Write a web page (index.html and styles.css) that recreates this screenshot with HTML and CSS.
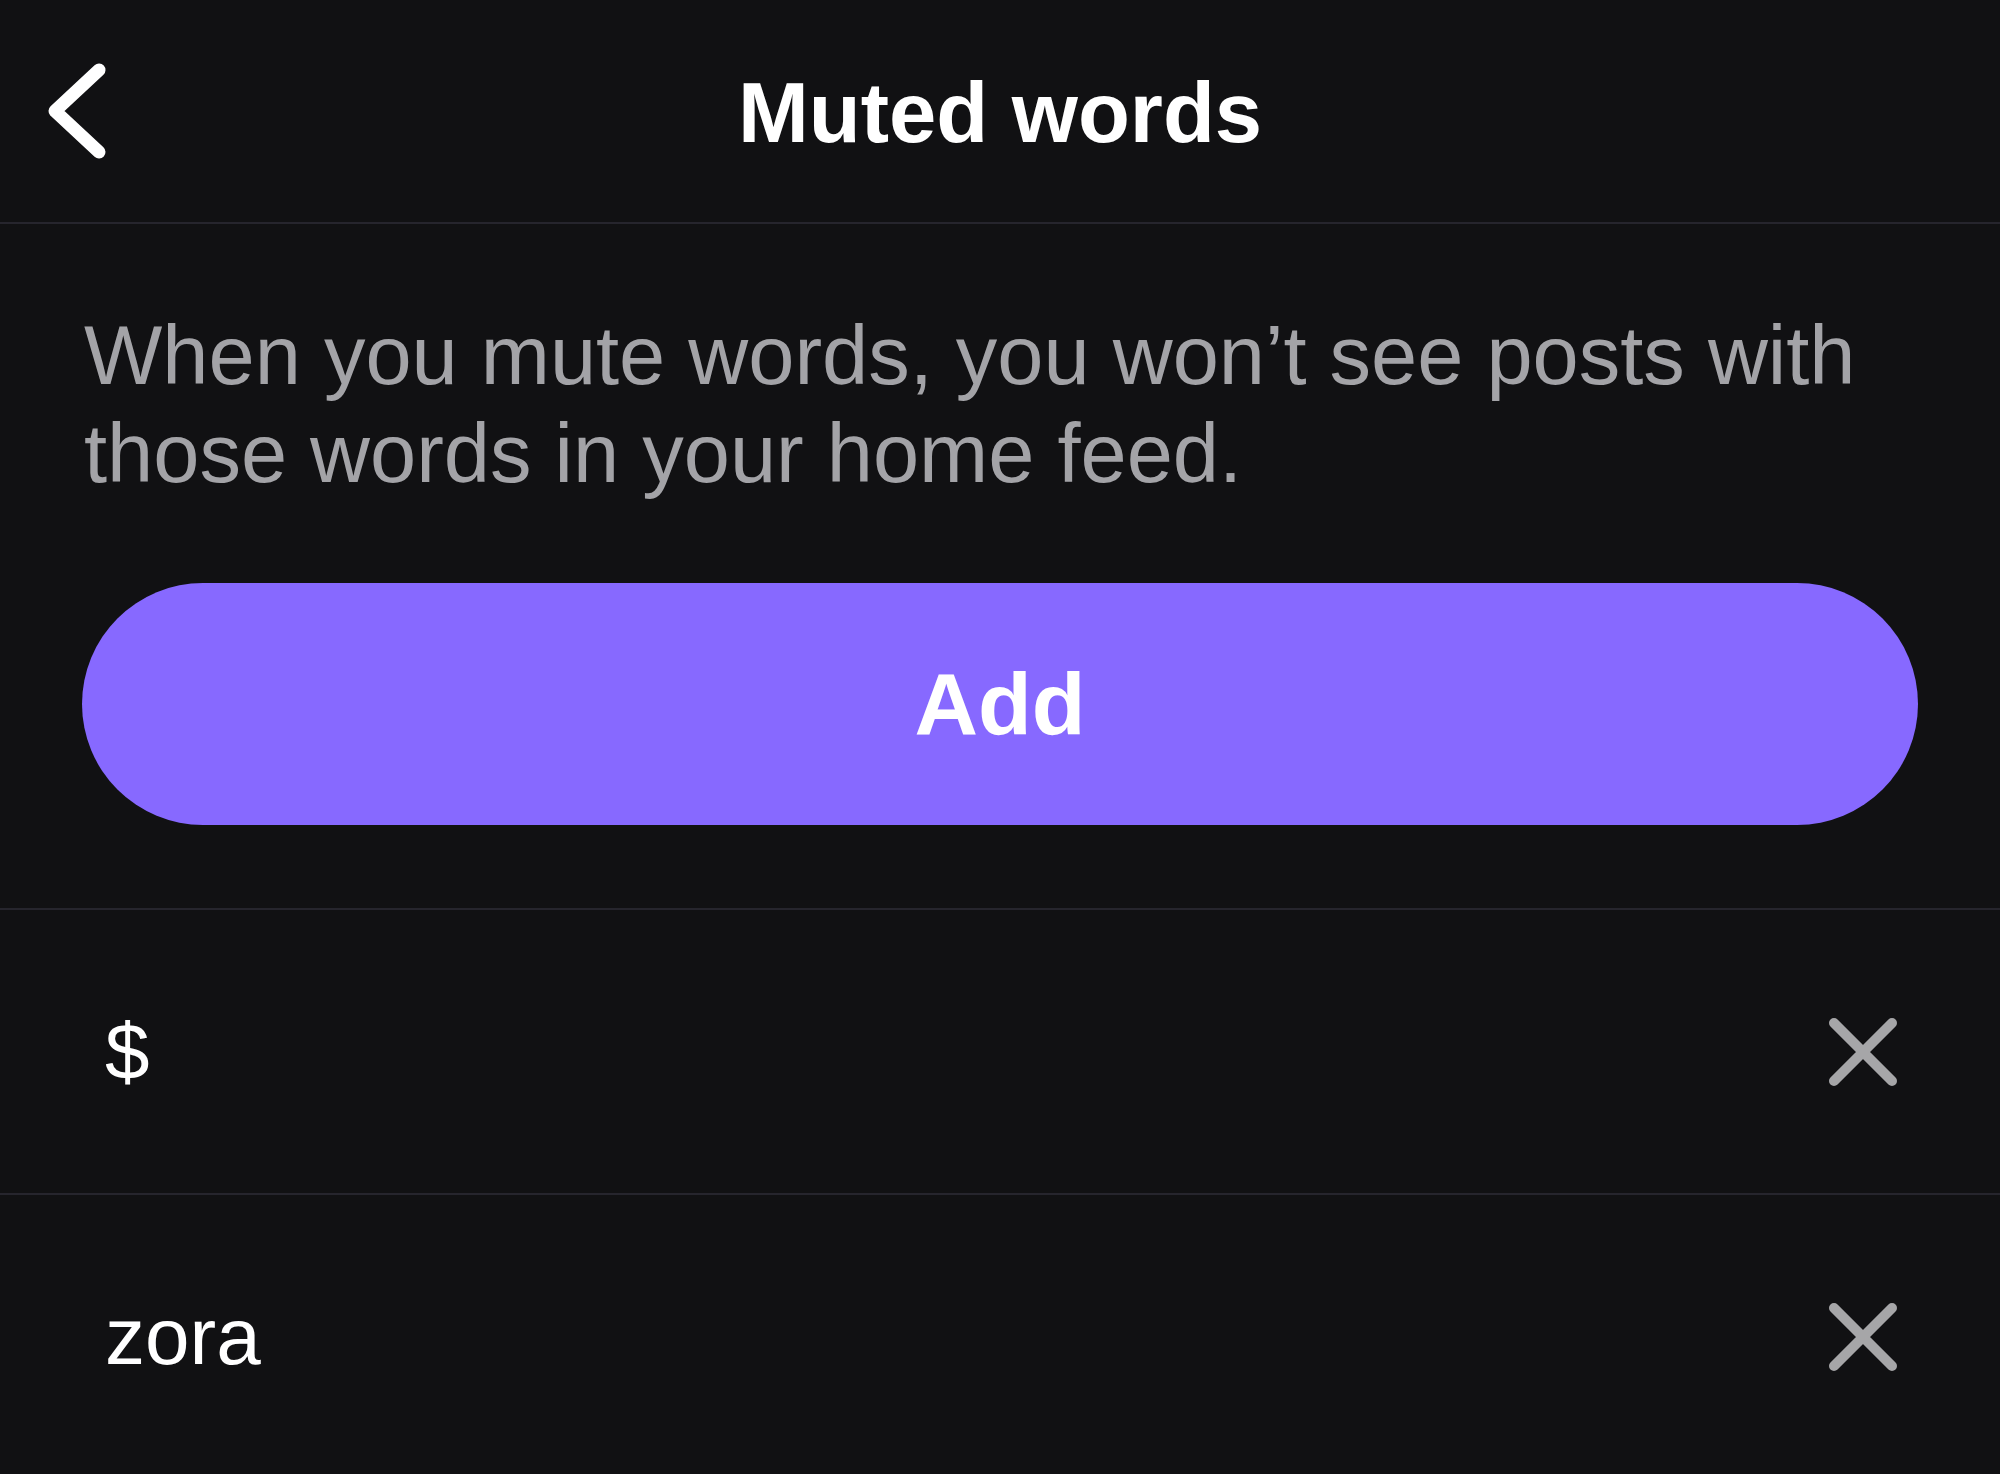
FILE: index.html
```html
<!DOCTYPE html>
<html lang="en">
<head>
<meta charset="utf-8">
<title>Muted words</title>
<link rel="stylesheet" href="styles.css">
</head>
<body>
<div class="screen">
  <header class="topbar">
    <div class="topbar-left">
      <svg class="back-icon" width="66" height="102" viewBox="0 0 66 102" aria-hidden="true">
        <path d="M56 10 L12 51 L56 92" fill="none" stroke="#ffffff" stroke-width="13" stroke-linecap="round" stroke-linejoin="round"/>
      </svg>
    </div>
    <h1 class="title">Muted words</h1>
    <div class="topbar-right"></div>
  </header>

  <section class="intro">
    <p class="description">When you mute words, you won’t see posts with those words in your home feed.</p>
    <button class="add-button" type="button">Add</button>
  </section>

  <ul class="word-list">
    <li class="word-row">
      <span class="word">$</span>
      <svg class="remove-icon" width="70" height="70" viewBox="0 0 70 70" aria-hidden="true">
        <path d="M6 6 L64 64 M64 6 L6 64" fill="none" stroke="#a6a6a8" stroke-width="10" stroke-linecap="round"/>
      </svg>
    </li>
    <li class="word-row">
      <span class="word">zora</span>
      <svg class="remove-icon" width="70" height="70" viewBox="0 0 70 70" aria-hidden="true">
        <path d="M6 6 L64 64 M64 6 L6 64" fill="none" stroke="#a6a6a8" stroke-width="10" stroke-linecap="round"/>
      </svg>
    </li>
  </ul>
</div>
</body>
</html>
```

FILE: styles.css
```css
html, body {
  margin: 0;
  padding: 0;
  background: #111113;
}

body {
  font-family: "Liberation Sans", Arial, sans-serif;
  color: #ffffff;
  overflow: hidden;
}

.screen {
  width: 2000px;
  min-height: 1474px;
  background: #111113;
}

.topbar {
  height: 222px;
  display: grid;
  grid-template-columns: 1fr auto 1fr;
  align-items: center;
  border-bottom: 2px solid #26252d;
}

.topbar-left {
  display: flex;
  align-items: center;
  padding-left: 43px;
}

.back-icon {
  display: block;
}

.title {
  margin: 0;
  font-size: 85px;
  font-weight: 700;
  line-height: 1;
  color: #ffffff;
  padding-top: 2px;
}

.intro {
  padding: 83px 82px 83px 84px;
  border-bottom: 2px solid #26252d;
}

.description {
  margin: 0;
  font-size: 83px;
  line-height: 98px;
  color: #a3a3a7;
}

.add-button {
  display: flex;
  align-items: center;
  justify-content: center;
  width: 1836px;
  height: 242px;
  margin: 80px 0 0 -2px;
  border: none;
  border-radius: 121px;
  background: #8769ff;
  color: #ffffff;
  font-family: "Liberation Sans", Arial, sans-serif;
  font-size: 88px;
  font-weight: 700;
  padding: 0;
}

.word-list {
  list-style: none;
  margin: 0;
  padding: 0;
}

.word-row {
  height: 283px;
  display: flex;
  align-items: center;
  justify-content: space-between;
  padding: 0 102px 0 105px;
  border-bottom: 2px solid #26252d;
}

.word {
  font-size: 80px;
  line-height: 1;
  color: #ffffff;
}

.remove-icon {
  display: block;
}
```
